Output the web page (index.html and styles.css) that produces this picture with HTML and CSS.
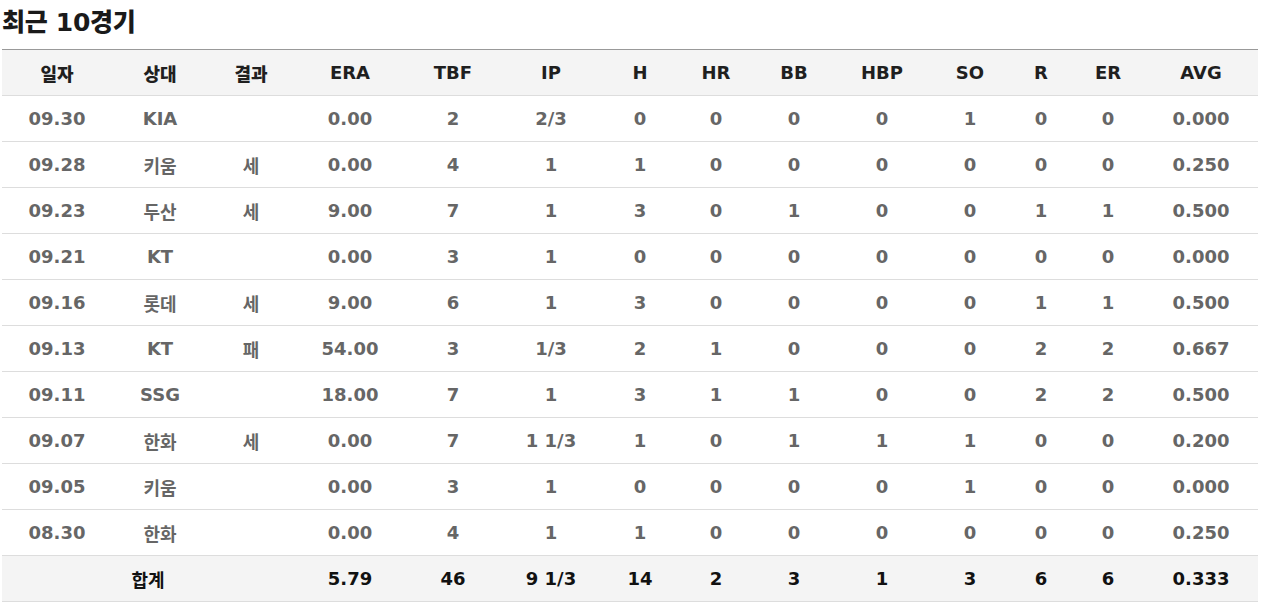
FILE: index.html
```html
<!DOCTYPE html>
<html lang="ko">
<head>
<meta charset="utf-8">
<link rel="stylesheet" href="styles.css">
</head>
<body>
<section class="recent">
  <h2 class="title">최근 10경기</h2>
  <table class="stats">
    <colgroup>
      <col class="c1"><col class="c2"><col class="c3"><col class="c4"><col class="c5"><col class="c6"><col class="c7">
      <col class="c8"><col class="c9"><col class="c10"><col class="c11"><col class="c12"><col class="c13"><col class="c14">
    </colgroup>
    <thead>
      <tr><th>일자</th><th>상대</th><th>결과</th><th>ERA</th><th>TBF</th><th>IP</th><th>H</th><th>HR</th><th>BB</th><th>HBP</th><th>SO</th><th>R</th><th>ER</th><th>AVG</th></tr>
    </thead>
    <tbody>
      <tr><td>09.30</td><td>KIA</td><td></td><td>0.00</td><td>2</td><td>2/3</td><td>0</td><td>0</td><td>0</td><td>0</td><td>1</td><td>0</td><td>0</td><td>0.000</td></tr>
      <tr><td>09.28</td><td>키움</td><td>세</td><td>0.00</td><td>4</td><td>1</td><td>1</td><td>0</td><td>0</td><td>0</td><td>0</td><td>0</td><td>0</td><td>0.250</td></tr>
      <tr><td>09.23</td><td>두산</td><td>세</td><td>9.00</td><td>7</td><td>1</td><td>3</td><td>0</td><td>1</td><td>0</td><td>0</td><td>1</td><td>1</td><td>0.500</td></tr>
      <tr><td>09.21</td><td>KT</td><td></td><td>0.00</td><td>3</td><td>1</td><td>0</td><td>0</td><td>0</td><td>0</td><td>0</td><td>0</td><td>0</td><td>0.000</td></tr>
      <tr><td>09.16</td><td>롯데</td><td>세</td><td>9.00</td><td>6</td><td>1</td><td>3</td><td>0</td><td>0</td><td>0</td><td>0</td><td>1</td><td>1</td><td>0.500</td></tr>
      <tr><td>09.13</td><td>KT</td><td>패</td><td>54.00</td><td>3</td><td>1/3</td><td>2</td><td>1</td><td>0</td><td>0</td><td>0</td><td>2</td><td>2</td><td>0.667</td></tr>
      <tr><td>09.11</td><td>SSG</td><td></td><td>18.00</td><td>7</td><td>1</td><td>3</td><td>1</td><td>1</td><td>0</td><td>0</td><td>2</td><td>2</td><td>0.500</td></tr>
      <tr><td>09.07</td><td>한화</td><td>세</td><td>0.00</td><td>7</td><td>1 1/3</td><td>1</td><td>0</td><td>1</td><td>1</td><td>1</td><td>0</td><td>0</td><td>0.200</td></tr>
      <tr><td>09.05</td><td>키움</td><td></td><td>0.00</td><td>3</td><td>1</td><td>0</td><td>0</td><td>0</td><td>0</td><td>1</td><td>0</td><td>0</td><td>0.000</td></tr>
      <tr><td>08.30</td><td>한화</td><td></td><td>0.00</td><td>4</td><td>1</td><td>1</td><td>0</td><td>0</td><td>0</td><td>0</td><td>0</td><td>0</td><td>0.250</td></tr>
    </tbody>
    <tfoot>
      <tr><td colspan="3">합계</td><td>5.79</td><td>46</td><td>9 1/3</td><td>14</td><td>2</td><td>3</td><td>1</td><td>3</td><td>6</td><td>6</td><td>0.333</td></tr>
    </tfoot>
  </table>
</section>
</body>
</html>
```
FILE: styles.css
```css
html, body {
  margin: 0;
  padding: 0;
  background: #fff;
}
body {
  font-family: "DejaVu Sans", "Noto Sans CJK KR", sans-serif;
  padding: 0 6px 0 2px;
}
.title {
  margin: 0;
  padding-top: 6px;
  height: 49px;
  box-sizing: border-box;
  font-size: 25px;
  line-height: 33px;
  font-weight: 900;
  color: #1a1a1a;
  letter-spacing: -0.3px;
}
.stats {
  width: 1256px;
  border-collapse: collapse;
  table-layout: fixed;
  border-top: 1px solid #999;
}
.c1 { width: 110px; }
.c2 { width: 96px; }
.c3 { width: 86px; }
.c4 { width: 112px; }
.c5 { width: 94px; }
.c6 { width: 102px; }
.c7 { width: 76px; }
.c8 { width: 76px; }
.c9 { width: 80px; }
.c10 { width: 96px; }
.c11 { width: 80px; }
.c12 { width: 62px; }
.c13 { width: 72px; }
.c14 { width: 114px; }
.stats th, .stats td {
  height: 45px;
  padding: 0;
  text-align: center;
  vertical-align: middle;
  border-bottom: 1px solid #ddd;
  font-weight: 700;
  font-size: 18px;
}
.stats thead th {
  background: #f4f4f4;
  color: #1f1f1f;
  font-weight: 900;
}
.stats tbody td {
  color: #666;
}
.stats tfoot td {
  background: #f4f4f4;
  color: #111;
}
```
